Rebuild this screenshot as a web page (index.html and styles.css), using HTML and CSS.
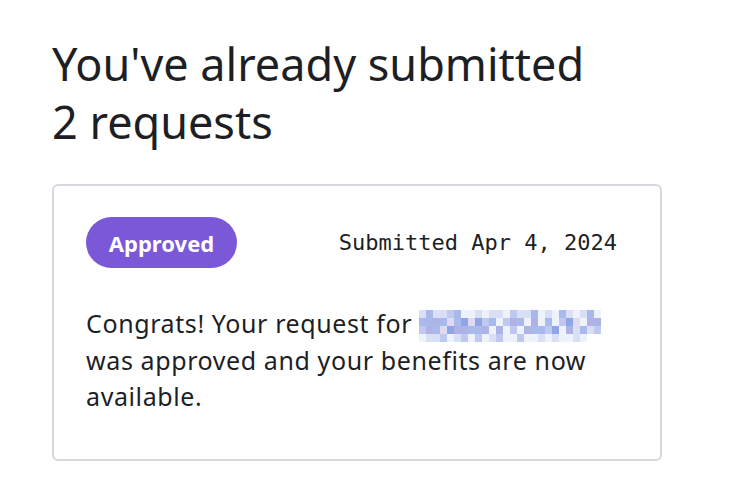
FILE: index.html
```html
<!DOCTYPE html>
<html lang="en">
<head>
<meta charset="utf-8">
<title>Requests</title>
<link rel="stylesheet" href="styles.css">
</head>
<body>
<main class="page">
  <h1 class="title">You've already submitted 2 requests</h1>
  <section class="card">
    <div class="card-head">
      <span class="badge">Approved</span>
      <span class="date">Submitted Apr 4, 2024</span>
    </div>
    <p class="message">Congrats! Your request for <span class="blur" aria-hidden="true"><span class="blur-grid"><i class="e"></i><i class="b"></i><i class="e"></i><i class="e"></i><i class="c"></i><i class="b"></i><i class="w"></i><i class="w"></i><i class="e"></i><i class="w"></i><i class="e"></i><i class="e"></i><i class="w"></i><i class="c"></i><i class="e"></i><i class="e"></i><i class="b"></i><i class="w"></i><i class="e"></i><i class="w"></i><i class="b"></i><i class="e"></i><i class="w"></i><i class="e"></i><i class="b"></i><i class="w"></i><i class="b"></i><i class="b"></i><i class="d"></i><i class="b"></i><i class="f"></i><i class="b"></i><i class="a"></i><i class="f"></i><i class="a"></i><i class="c"></i><i class="b"></i><i class="w"></i><i class="c"></i><i class="d"></i><i class="b"></i><i class="w"></i><i class="d"></i><i class="w"></i><i class="b"></i><i class="w"></i><i class="c"></i><i class="a"></i><i class="f"></i><i class="w"></i><i class="d"></i><i class="d"></i><i class="c"></i><i class="d"></i><i class="b"></i><i class="f"></i><i class="a"></i><i class="d"></i><i class="d"></i><i class="b"></i><i class="b"></i><i class="d"></i><i class="w"></i><i class="d"></i><i class="w"></i><i class="c"></i><i class="w"></i><i class="d"></i><i class="b"></i><i class="b"></i><i class="c"></i><i class="a"></i><i class="w"></i><i class="d"></i><i class="e"></i><i class="b"></i><i class="e"></i><i class="c"></i><i class="w"></i><i class="e"></i><i class="e"></i><i class="c"></i><i class="w"></i><i class="e"></i><i class="c"></i><i class="w"></i><i class="c"></i><i class="w"></i><i class="e"></i><i class="c"></i><i class="w"></i><i class="w"></i><i class="c"></i><i class="w"></i><i class="w"></i><i class="e"></i><i class="w"></i><i class="e"></i><i class="w"></i><i class="w"></i><i class="e"></i><i class="w"></i></span></span> was approved and your benefits are now available.</p>
  </section>
</main>
</body>
</html>
```
FILE: styles.css
```css
html, body {
  margin: 0;
  padding: 0;
  background: #ffffff;
}

body {
  font-family: "Noto Sans", "Open Sans", sans-serif;
  color: #1f2328;
}

.page {
  padding: 35px 0 0 52px;
  width: 610px;
}

.title {
  margin: 0 0 33px 0;
  max-width: 545px;
  font-size: 45px;
  font-weight: 400;
  line-height: 58px;
  color: #1d1f24;
}

.card {
  box-sizing: border-box;
  width: 610px;
  min-height: 277px;
  border: 2px solid #d5d8dd;
  border-radius: 6px;
  padding: 31px 43px 40px 32px;
  background: #fff;
}

.card-head {
  display: flex;
  justify-content: space-between;
  align-items: center;
}

.badge {
  display: inline-flex;
  align-items: center;
  justify-content: center;
  height: 51px;
  width: 151px;
  border-radius: 26px;
  background: #7b58d7;
  color: #fff;
  font-weight: 700;
  font-size: 22px;
}

.date {
  font-family: "DejaVu Sans Mono", "Liberation Mono", monospace;
  font-size: 22px;
  color: #1d1f24;
}

.message {
  margin: 37px 0 0 0;
  font-size: 25px;
  letter-spacing: 0.6px;
  line-height: 36px;
  color: #1d1f24;
}

.blur {
  display: inline-block;
  overflow: hidden;
  vertical-align: -9px;
}

.blur-grid {
  display: grid;
  grid-template-columns: repeat(26, 7px);
  grid-auto-rows: 8px;
}

.blur i { display: block; }
.blur .a { background: #8ea6e6; }
.blur .b { background: #a8b9ec; }
.blur .c { background: #bfc9ef; }
.blur .d { background: #afb2e4; }
.blur .e { background: #d9e0f6; }
.blur .f { background: #e0daf0; }
.blur .w { background: #eef2fb; }
```
